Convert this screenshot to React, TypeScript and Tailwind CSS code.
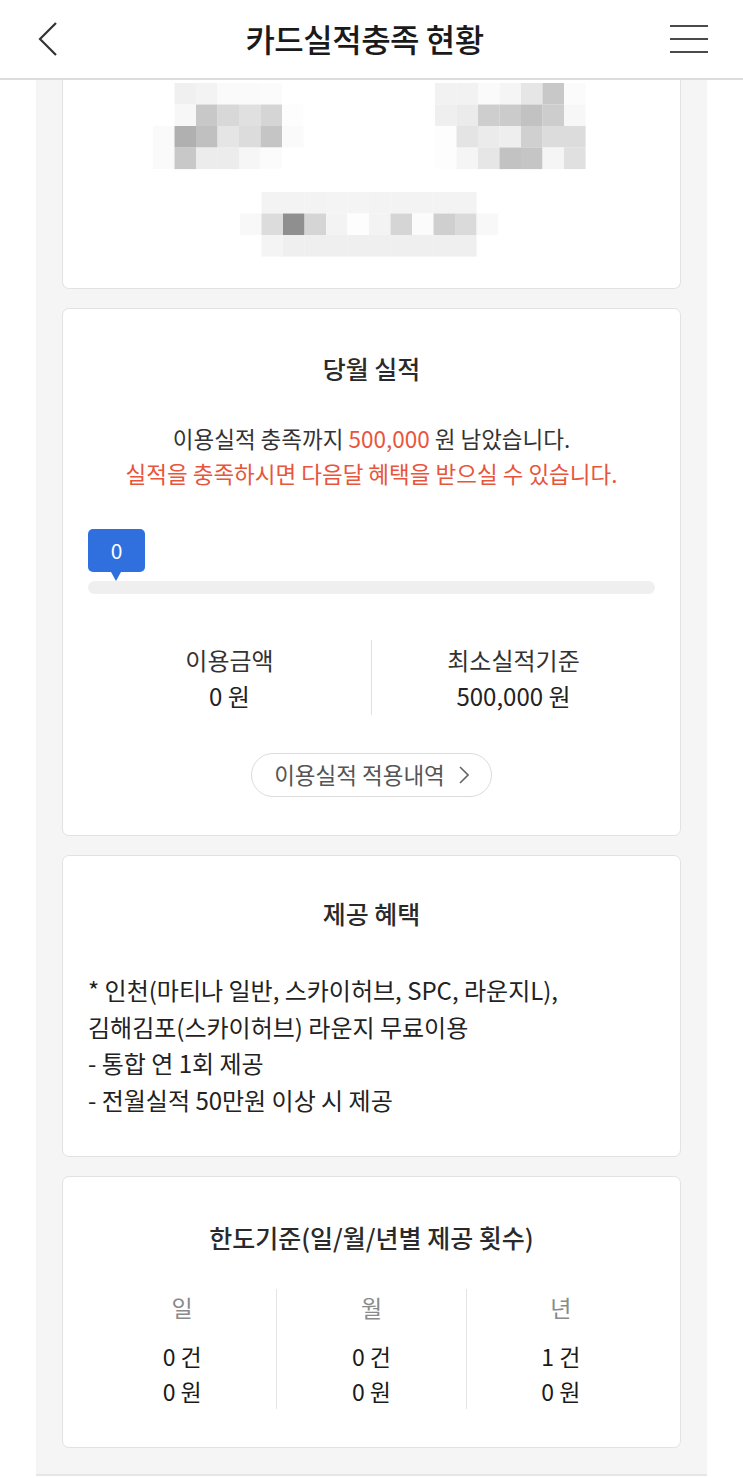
import React from 'react';

const FONT = { fontFamily: '"Noto Sans CJK KR", "Noto Sans", sans-serif' };

// blurred card image, drawn as a mosaic
const leftBlock = [
  ['', '#f0f0f0', '#f3f3f3', '#fafafa', '#fafafa', '#fbfbfb', ''],
  ['', '#f7f7f7', '#c8c8c8', '#d8d8d8', '#e0e0e0', '#d5d5d5', '#fdfdfd'],
  ['#fafafa', '#b0b0b0', '#c0c0c0', '#e5e5e5', '#dcdcdc', '#c5c5c5', '#fafafa'],
  ['#fafafa', '#c8c8c8', '#ececec', '#ececec', '#f6f6f6', '#fbfbfb', ''],
];
const rightBlock = [
  ['#f2f2f2', '#f2f2f2', '#fafafa', '#f5f5f5', '#e6e6e6', '#c8c8c8', '#fbfbfb'],
  ['#efefef', '#ebebeb', '#cecece', '#cbcbcb', '#c2c2c2', '#cdcdcd', '#f7f7f7'],
  ['#fdfdfd', '#e4e4e4', '#ebebeb', '#eeeeee', '#d0d0d0', '#dcdcdc', '#dcdcdc'],
  ['#fdfdfd', '#f5f5f5', '#e6e6e6', '#c2c2c2', '#c5c5c5', '#f5f5f5', '#e0e0e0'],
];
const bottomBlock = [
  ['', '#f3f3f3', '#f3f3f3', '#f3f3f3', '#f4f4f4', '#f4f4f4', '#f3f3f3', '#f3f3f3', '#f3f3f3', '#f3f3f3', '#f3f3f3', '', ''],
  ['#f8f8f8', '#dcdcdc', '#8f8f8f', '#d5d5d5', '#f3f3f3', '#fdfdfd', '#f3f3f3', '#d5d5d5', '#fbfbfb', '#cfcfcf', '#dadada', '#f8f8f8', ''],
  ['', '#f4f4f4', '#efefef', '#efefef', '#efefef', '#efefef', '#efefef', '#efefef', '#efefef', '#efefef', '#efefef', '', ''],
];

const Mosaic = ({ rows, x, y }: { rows: string[][]; x: number; y: number }) => (
  <>
    {rows.map((row, r) =>
      row.map((c, i) =>
        c ? <rect key={`${r}-${i}`} x={x + i * 21.5} y={y + r * 21.5} width={21.6} height={21.6} fill={c} /> : null
      )
    )}
  </>
);

const Card = ({ children, className = '' }: { children: React.ReactNode; className?: string }) => (
  <div className={`bg-white border border-[#e2e2e2] rounded-[7px] ${className}`}>{children}</div>
);

const LimitCol = ({ label, count, amount, last }: { label: string; count: string; amount: string; last?: boolean }) => (
  <div className={`flex-1 flex flex-col items-center ${last ? '' : 'border-r border-[#e4e4e4]'}`}>
    <div className="text-[23px] leading-[36px] text-[#8a8a8a]">{label}</div>
    <div className="mt-[14px] text-[23px] leading-[35px] text-[#1a1a1a]">{count} 건</div>
    <div className="text-[23px] leading-[35px] text-[#1a1a1a]">{amount} 원</div>
  </div>
);

const App: React.FC = () => {
  return (
    <div className="w-[743px] min-h-[1478px] bg-white text-[#333]" style={FONT}>
      {/* Header */}
      <div className="h-[80px] border-b-2 border-[#dcdcdc] flex items-center justify-between px-[36px]">
        <svg width="22" height="36" viewBox="0 0 22 36" className="ml-[1px]">
          <path d="M19 2 L3 18 L19 34" fill="none" stroke="#333" strokeWidth="2.2" />
        </svg>
        <h1 className="text-[32px] font-medium text-[#1a1a1a] tracking-[-0.5px] mt-[-3px]">카드실적충족 현황</h1>
        <svg width="38" height="30" viewBox="0 0 38 30" className="mr-[-1px]">
          <path d="M0 2 H38 M0 15 H38 M0 28 H38" stroke="#4a4a4a" strokeWidth="2" />
        </svg>
      </div>

      {/* Content column */}
      <div className="mx-[36px] bg-[#f5f5f5] px-[26px] pb-[26px] border-b-2 border-[#e6e6e6] flex flex-col gap-[19px]">
        {/* Card image (scrolled) */}
        <Card className="border-t-0 rounded-t-none h-[209px]">
          <svg width="618" height="208" viewBox="62 80 618 208" className="block">
            <Mosaic rows={leftBlock} x={152} y={83} />
            <Mosaic rows={rightBlock} x={434} y={83} />
            <Mosaic rows={bottomBlock} x={239} y={192} />
          </svg>
        </Card>

        {/* 당월 실적 */}
        <Card className="px-[25px] pt-[41px] pb-[38px]">
          <h2 className="text-center text-[25px] font-medium leading-[36px] text-[#2a2a2a]">당월 실적</h2>
          <div className="mt-[35px] text-center text-[22.5px] leading-[35px]">
            <p className="text-[#333]">
              이용실적 충족까지 <span className="text-[#e8553d]">500,000</span> 원 남았습니다.
            </p>
            <p className="text-[#e8553d]">실적을 충족하시면 다음달 혜택을 받으실 수 있습니다.</p>
          </div>

          <div className="mt-[38px] relative h-[66px]">
            <div className="absolute left-0 top-0 w-[57px] h-[43px] rounded-[5px] bg-[#2f6fde] text-white text-[21px] flex items-center justify-center">
              0
            </div>
            <div className="absolute left-[23px] top-[43px] w-0 h-0 border-l-[5px] border-r-[5px] border-t-[9px] border-l-transparent border-r-transparent border-t-[#2f6fde]" />
            <div className="absolute left-0 right-0 top-[52px] h-[13px] rounded-full bg-[#efefef]" />
          </div>

          <div className="mt-[45px] flex">
            <div className="flex-1 flex flex-col items-center justify-center border-r border-[#e0e0e0] h-[75px]">
              <div className="text-[24px] leading-[36px] text-[#333]">이용금액</div>
              <div className="text-[24px] leading-[36px] text-[#222]">0 원</div>
            </div>
            <div className="flex-1 flex flex-col items-center justify-center h-[75px]">
              <div className="text-[24px] leading-[36px] text-[#333]">최소실적기준</div>
              <div className="text-[24px] leading-[36px] text-[#222]">500,000 원</div>
            </div>
          </div>

          <div className="mt-[38px] flex justify-center">
            <button className="h-[44px] px-[22px] rounded-full border border-[#dcdcdc] text-[22.5px] text-[#555] flex items-center gap-[14px]">
              이용실적 적용내역
              <svg width="10" height="18" viewBox="0 0 10 18">
                <path d="M1 1 L9 9 L1 17" fill="none" stroke="#666" strokeWidth="1.6" />
              </svg>
            </button>
          </div>
        </Card>

        {/* 제공 혜택 */}
        <Card className="px-[25px] pt-[39px] pb-[38px]">
          <h2 className="text-center text-[25px] font-medium leading-[36px] text-[#2a2a2a]">제공 혜택</h2>
          <div className="mt-[41px] text-[24px] leading-[36.5px] text-[#222]">
            <p>* 인천(마티나 일반, 스카이허브, SPC, 라운지L),</p>
            <p>김해김포(스카이허브) 라운지 무료이용</p>
            <p>- 통합 연 1회 제공</p>
            <p>- 전월실적 50만원 이상 시 제공</p>
          </div>
        </Card>

        {/* 한도기준 */}
        <Card className="px-[25px] pt-[42px] pb-[38px]">
          <h2 className="text-center text-[25px] font-medium leading-[36px] text-[#2a2a2a]">
            한도기준(일/월/년별 제공 횟수)
          </h2>
          <div className="mt-[34px] flex">
            <LimitCol label="일" count="0" amount="0" />
            <LimitCol label="월" count="0" amount="0" />
            <LimitCol label="년" count="1" amount="0" last />
          </div>
        </Card>
      </div>
    </div>
  );
};

export default App;
